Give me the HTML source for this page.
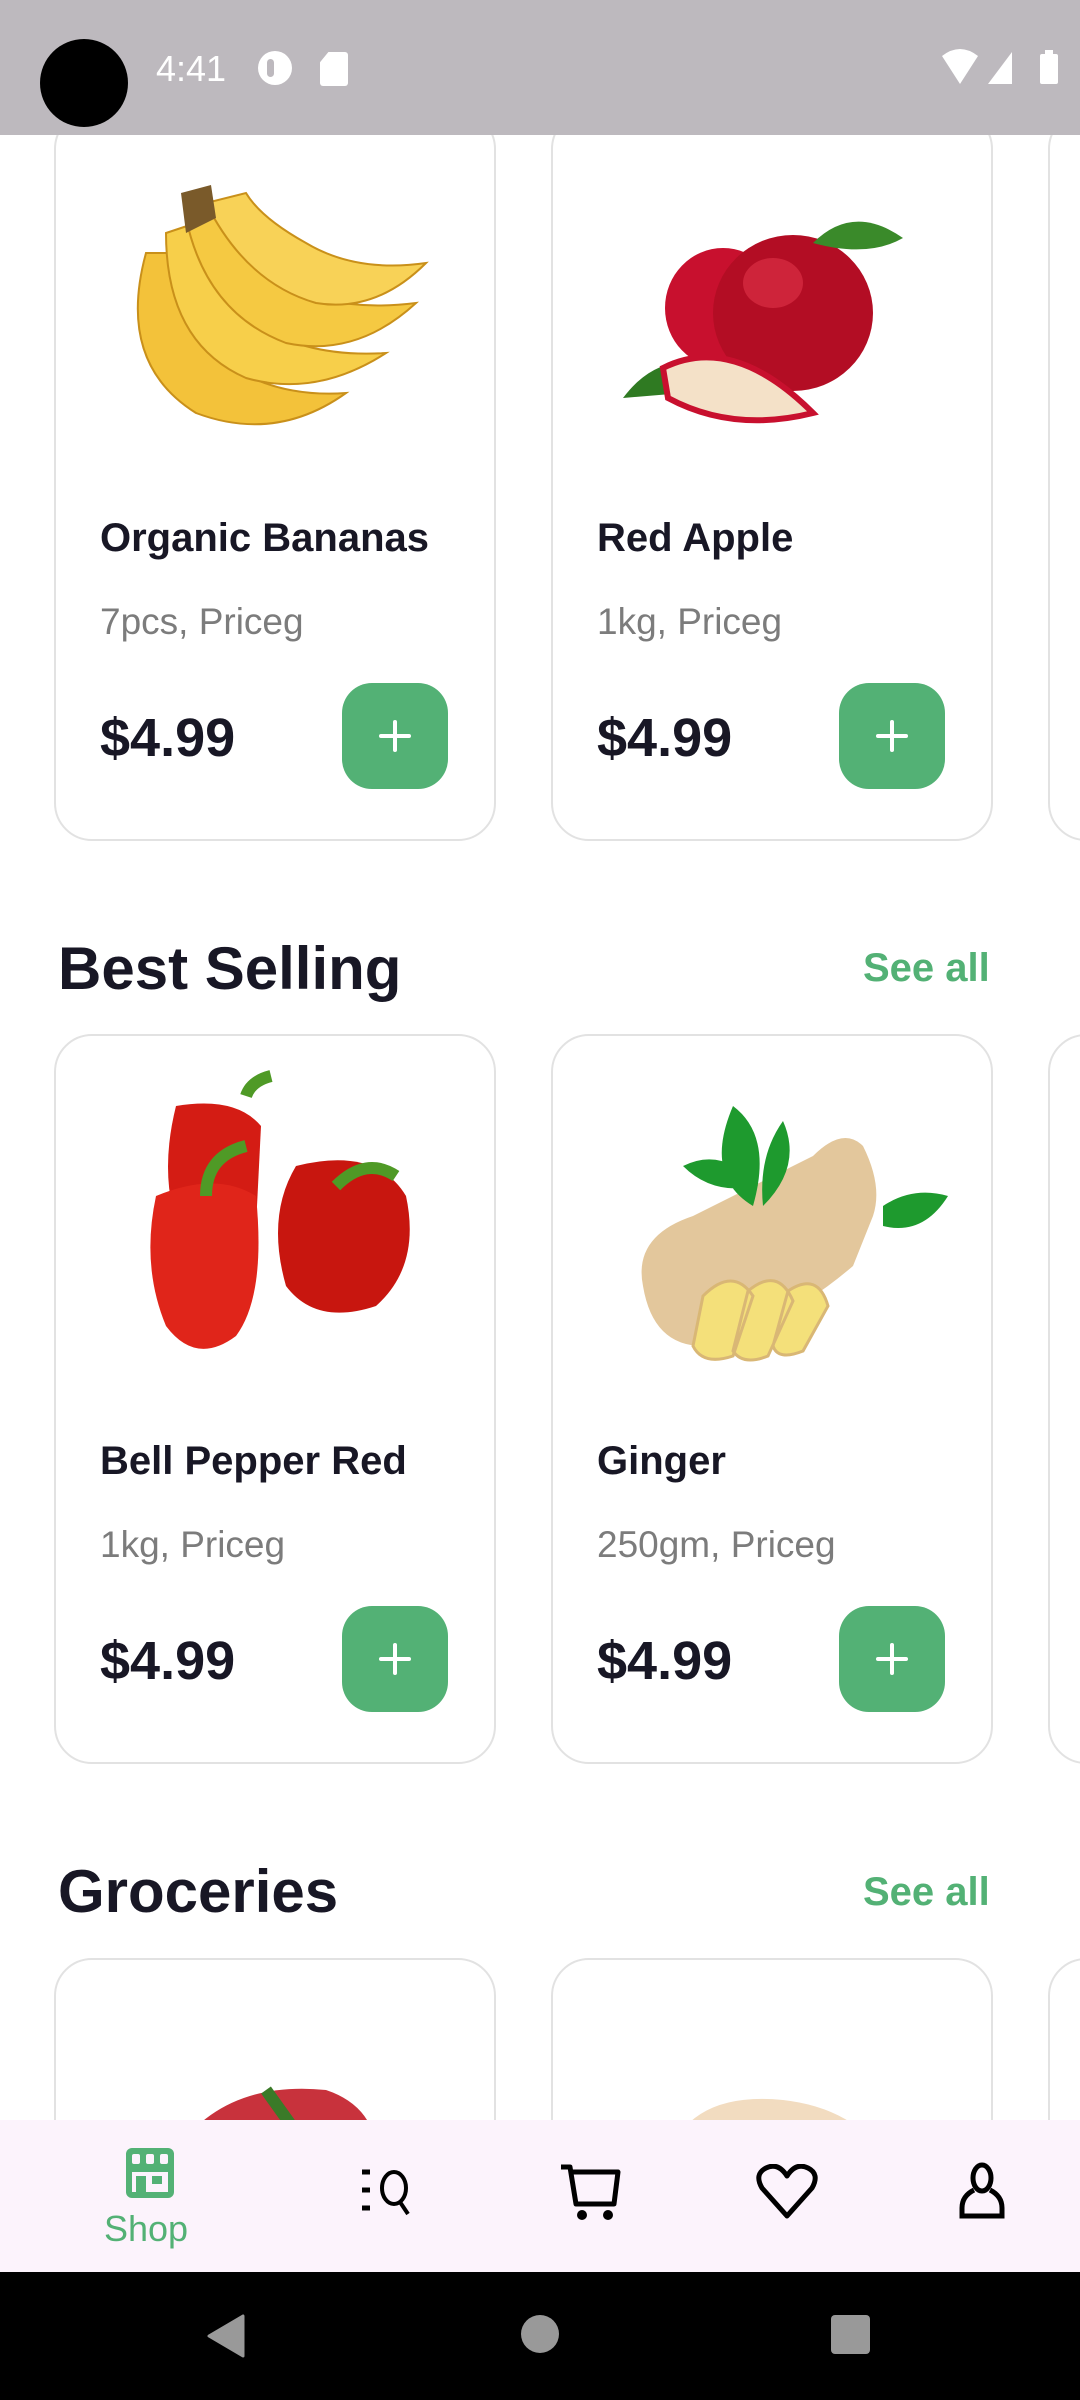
<!DOCTYPE html>
<html style="height:2400px;overflow:hidden"><head><meta charset="utf-8"><style>
*{margin:0;padding:0;box-sizing:border-box}
body{width:1080px;height:2400px;overflow:hidden;background:#fff;font-family:"Liberation Sans",Roboto,sans-serif;position:relative}
.card{position:absolute;width:442px;height:730px;border:2.5px solid #e2e2e2;border-radius:38px;background:#fff;overflow:hidden}
.img{position:absolute;left:30px;top:30px;width:380px;height:320px}
.t{position:absolute;left:44px;top:403px;font-size:40px;font-weight:bold;color:#181725}
.s{position:absolute;left:44px;top:488px;font-size:37px;color:#7c7c7c}
.p{position:absolute;left:44px;top:594px;font-size:54px;font-weight:bold;color:#181725}
.b{position:absolute;left:286px;top:570px;width:106px;height:106px;border-radius:30px;background:#53b175}
.b:before,.b:after{content:"";position:absolute;background:#fff;left:37px;top:51px;width:32px;height:4px;border-radius:2px}
.b:after{transform:rotate(90deg)}
.h{position:absolute;left:58px;font-size:60px;font-weight:bold;color:#181725}
.sa{position:absolute;left:863px;font-size:40px;font-weight:bold;color:#53b175}
</style></head><body>

<!-- row1 -->
<div class="card" style="left:54px;top:111px">
<svg class="img" viewBox="0 0 380 320"><g stroke="#c9901a" stroke-width="2">
<path d="M60 110 Q30 220 110 270 Q190 300 260 250 Q190 255 140 220 Q90 180 90 110Z" fill="#f3c23a"/>
<path d="M80 90 Q80 200 160 235 Q230 255 300 210 Q220 215 170 180 Q120 140 110 80Z" fill="#f7cf4a"/>
<path d="M100 75 Q120 170 200 200 Q270 215 330 160 Q250 170 200 140 Q150 105 140 65Z" fill="#f5c942"/>
<path d="M120 60 Q160 140 230 160 Q290 170 340 120 Q270 130 220 100 Q175 75 160 50Z" fill="#f8d257"/></g>
<path d="M95 50 L125 42 L130 75 L100 90Z" fill="#7a5a2a"/></svg>
<div class="t">Organic Bananas</div><div class="s">7pcs, Priceg</div><div class="p">$4.99</div><div class="b"></div></div>

<div class="card" style="left:551px;top:111px">
<svg class="img" viewBox="0 0 380 320"><ellipse cx="140" cy="165" rx="58" ry="60" fill="#c8102e"/>
<ellipse cx="210" cy="170" rx="80" ry="78" fill="#b30d24"/><ellipse cx="190" cy="140" rx="30" ry="25" fill="#e0344a" opacity=".6"/>
<path d="M230 100 Q270 60 320 95 Q285 115 230 100Z" fill="#3a8a2a"/>
<path d="M40 255 Q70 215 110 220 L100 250Z" fill="#2f7a22"/>
<path d="M80 225 Q150 190 230 270 Q150 290 85 255Z" fill="#f4e1c8" stroke="#c8102e" stroke-width="6"/></svg>
<div class="t">Red Apple</div><div class="s">1kg, Priceg</div><div class="p">$4.99</div><div class="b"></div></div>

<div class="card" style="left:1048px;top:111px"></div>

<div class="h" style="top:934px">Best Selling</div><div class="sa" style="top:946px">See all</div>

<div class="card" style="left:54px;top:1034px">
<svg class="img" viewBox="0 0 380 320"><path d="M90 40 Q150 30 175 60 L170 160 Q150 200 100 180 Q70 120 90 40Z" fill="#d41c14"/>
<path d="M210 100 Q290 80 320 130 Q335 200 290 240 Q230 260 200 220 Q180 150 210 100Z" fill="#c8160f"/>
<path d="M70 130 Q130 105 170 130 Q180 230 150 270 Q110 300 80 260 Q55 200 70 130Z" fill="#e0251a"/>
<path d="M120 130 Q120 90 160 80 M250 120 Q280 90 310 110 M160 30 Q165 15 185 10" stroke="#4f9a26" stroke-width="12" fill="none"/></svg>
<div class="t">Bell Pepper Red</div><div class="s">1kg, Priceg</div><div class="p">$4.99</div><div class="b"></div></div>

<div class="card" style="left:551px;top:1034px">
<svg class="img" viewBox="0 0 380 320"><path d="M60 220 Q50 170 110 150 L230 90 Q260 60 280 80 Q300 120 290 150 L270 200 Q200 260 120 280 Q70 280 60 220Z" fill="#e3c79c"/>
<path d="M120 230 Q150 200 170 230 L150 290 Q120 300 110 280Z M165 225 Q195 200 210 235 L185 290 Q160 300 150 285Z M205 225 Q235 205 245 240 L220 285 Q195 295 190 280Z" fill="#f4e07a" stroke="#d9b775" stroke-width="3"/>
<path d="M150 40 Q190 70 170 140 Q120 110 150 40Z M200 55 Q220 100 180 140 Q175 90 200 55Z M100 100 Q140 80 175 120 Q130 130 100 100Z M300 140 Q330 120 365 130 Q340 170 300 160Z" fill="#1e9a2e"/></svg>
<div class="t">Ginger</div><div class="s">250gm, Priceg</div><div class="p">$4.99</div><div class="b"></div></div>

<div class="card" style="left:1048px;top:1034px"></div>

<div class="h" style="top:1857px">Groceries</div><div class="sa" style="top:1870px">See all</div>

<div class="card" style="left:54px;top:1958px;height:300px">
<svg class="img" viewBox="0 0 380 320"><path d="M90 160 Q140 90 240 100 Q300 120 290 190 L80 200Z" fill="#c8323c"/><path d="M180 100 L230 170" stroke="#3a7a28" stroke-width="12"/></svg></div>
<div class="card" style="left:551px;top:1958px;height:300px">
<svg class="img" viewBox="0 0 380 320"><path d="M80 180 Q100 100 200 110 Q290 120 320 200Z" fill="#f2dcc0"/></svg></div>
<div class="card" style="left:1048px;top:1958px;height:300px"></div>

<!-- status bar -->
<div style="position:absolute;left:0;top:0;width:1080px;height:135px;background:#bdb9be"></div>
<div style="position:absolute;left:40px;top:39px;width:88px;height:88px;border-radius:50%;background:#000"></div>
<div style="position:absolute;left:156px;top:48px;font-size:36px;color:#fff">4:41</div>
<div style="position:absolute;left:258px;top:51px;width:34px;height:34px;border-radius:50%;background:#fff"><div style="position:absolute;left:9px;top:8px;width:7px;height:18px;border-radius:4px;background:#bdb9be"></div></div>
<div style="position:absolute;left:320px;top:52px;width:28px;height:34px;background:#fff;border-radius:3px;clip-path:polygon(30% 0,100% 0,100% 100%,0 100%,0 30%)"></div>
<svg style="position:absolute;left:940px;top:48px" width="130" height="40"><path d="M2 8 Q20 -6 38 8 L20 36Z" fill="#fff"/><path d="M48 36 L72 4 L72 36Z" fill="#fff"/><rect x="100" y="6" width="18" height="30" rx="2" fill="#fff"/><rect x="105" y="2" width="8" height="5" fill="#fff"/></svg>

<!-- bottom nav -->
<div style="position:absolute;left:0;top:2120px;width:1080px;height:152px;background:#fcf3fc"></div>
<svg style="position:absolute;left:122px;top:2144px" width="56" height="56" viewBox="0 0 56 56"><rect x="4" y="4" width="48" height="50" rx="6" fill="#53b175"/><rect x="10" y="10" width="8" height="10" rx="2" fill="#fcf3fc"/><rect x="24" y="10" width="8" height="10" rx="2" fill="#fcf3fc"/><rect x="38" y="10" width="8" height="10" rx="2" fill="#fcf3fc"/><rect x="10" y="28" width="36" height="20" fill="#fcf3fc"/><rect x="14" y="32" width="10" height="16" fill="#53b175"/><rect x="30" y="32" width="10" height="8" fill="#53b175"/></svg>
<div style="position:absolute;left:104px;top:2208px;font-size:36px;color:#53b175">Shop</div>
<svg style="position:absolute;left:360px;top:2168px" width="66" height="50" viewBox="0 0 66 50"><path d="M2 4H10M2 22H10M2 40H10" stroke="#000" stroke-width="5"/><ellipse cx="34" cy="20" rx="12" ry="16" fill="none" stroke="#000" stroke-width="4"/><path d="M40 34L48 46" stroke="#000" stroke-width="4"/></svg>
<svg style="position:absolute;left:558px;top:2162px" width="66" height="60" viewBox="0 0 66 60"><path d="M3 5H12L18 42H56L60 10H14" fill="none" stroke="#000" stroke-width="5" stroke-linejoin="round"/><circle cx="24" cy="53" r="5"/><circle cx="50" cy="53" r="5"/></svg>
<svg style="position:absolute;left:756px;top:2164px" width="62" height="56" viewBox="0 0 62 56"><path d="M31 52L6 24Q-2 10 10 4Q22 -2 31 12Q40 -2 52 4Q64 10 56 24Z" fill="none" stroke="#000" stroke-width="5" stroke-linejoin="round"/></svg>
<svg style="position:absolute;left:958px;top:2162px" width="48" height="60" viewBox="0 0 48 60"><ellipse cx="24" cy="16" rx="9" ry="13" fill="none" stroke="#000" stroke-width="5"/><path d="M16 28Q4 34 4 46V54H44V46Q44 34 32 28" fill="none" stroke="#000" stroke-width="5"/></svg>

<!-- system nav -->
<div style="position:absolute;left:0;top:2272px;width:1080px;height:128px;background:#000"></div>
<svg style="position:absolute;left:205px;top:2314px" width="40" height="44"><path d="M38 2V42L4 22Z" fill="#999" stroke="#999" stroke-width="3" stroke-linejoin="round"/></svg>
<div style="position:absolute;left:521px;top:2315px;width:38px;height:38px;border-radius:50%;background:#999"></div>
<div style="position:absolute;left:831px;top:2315px;width:39px;height:39px;border-radius:4px;background:#999"></div>
</body></html>
